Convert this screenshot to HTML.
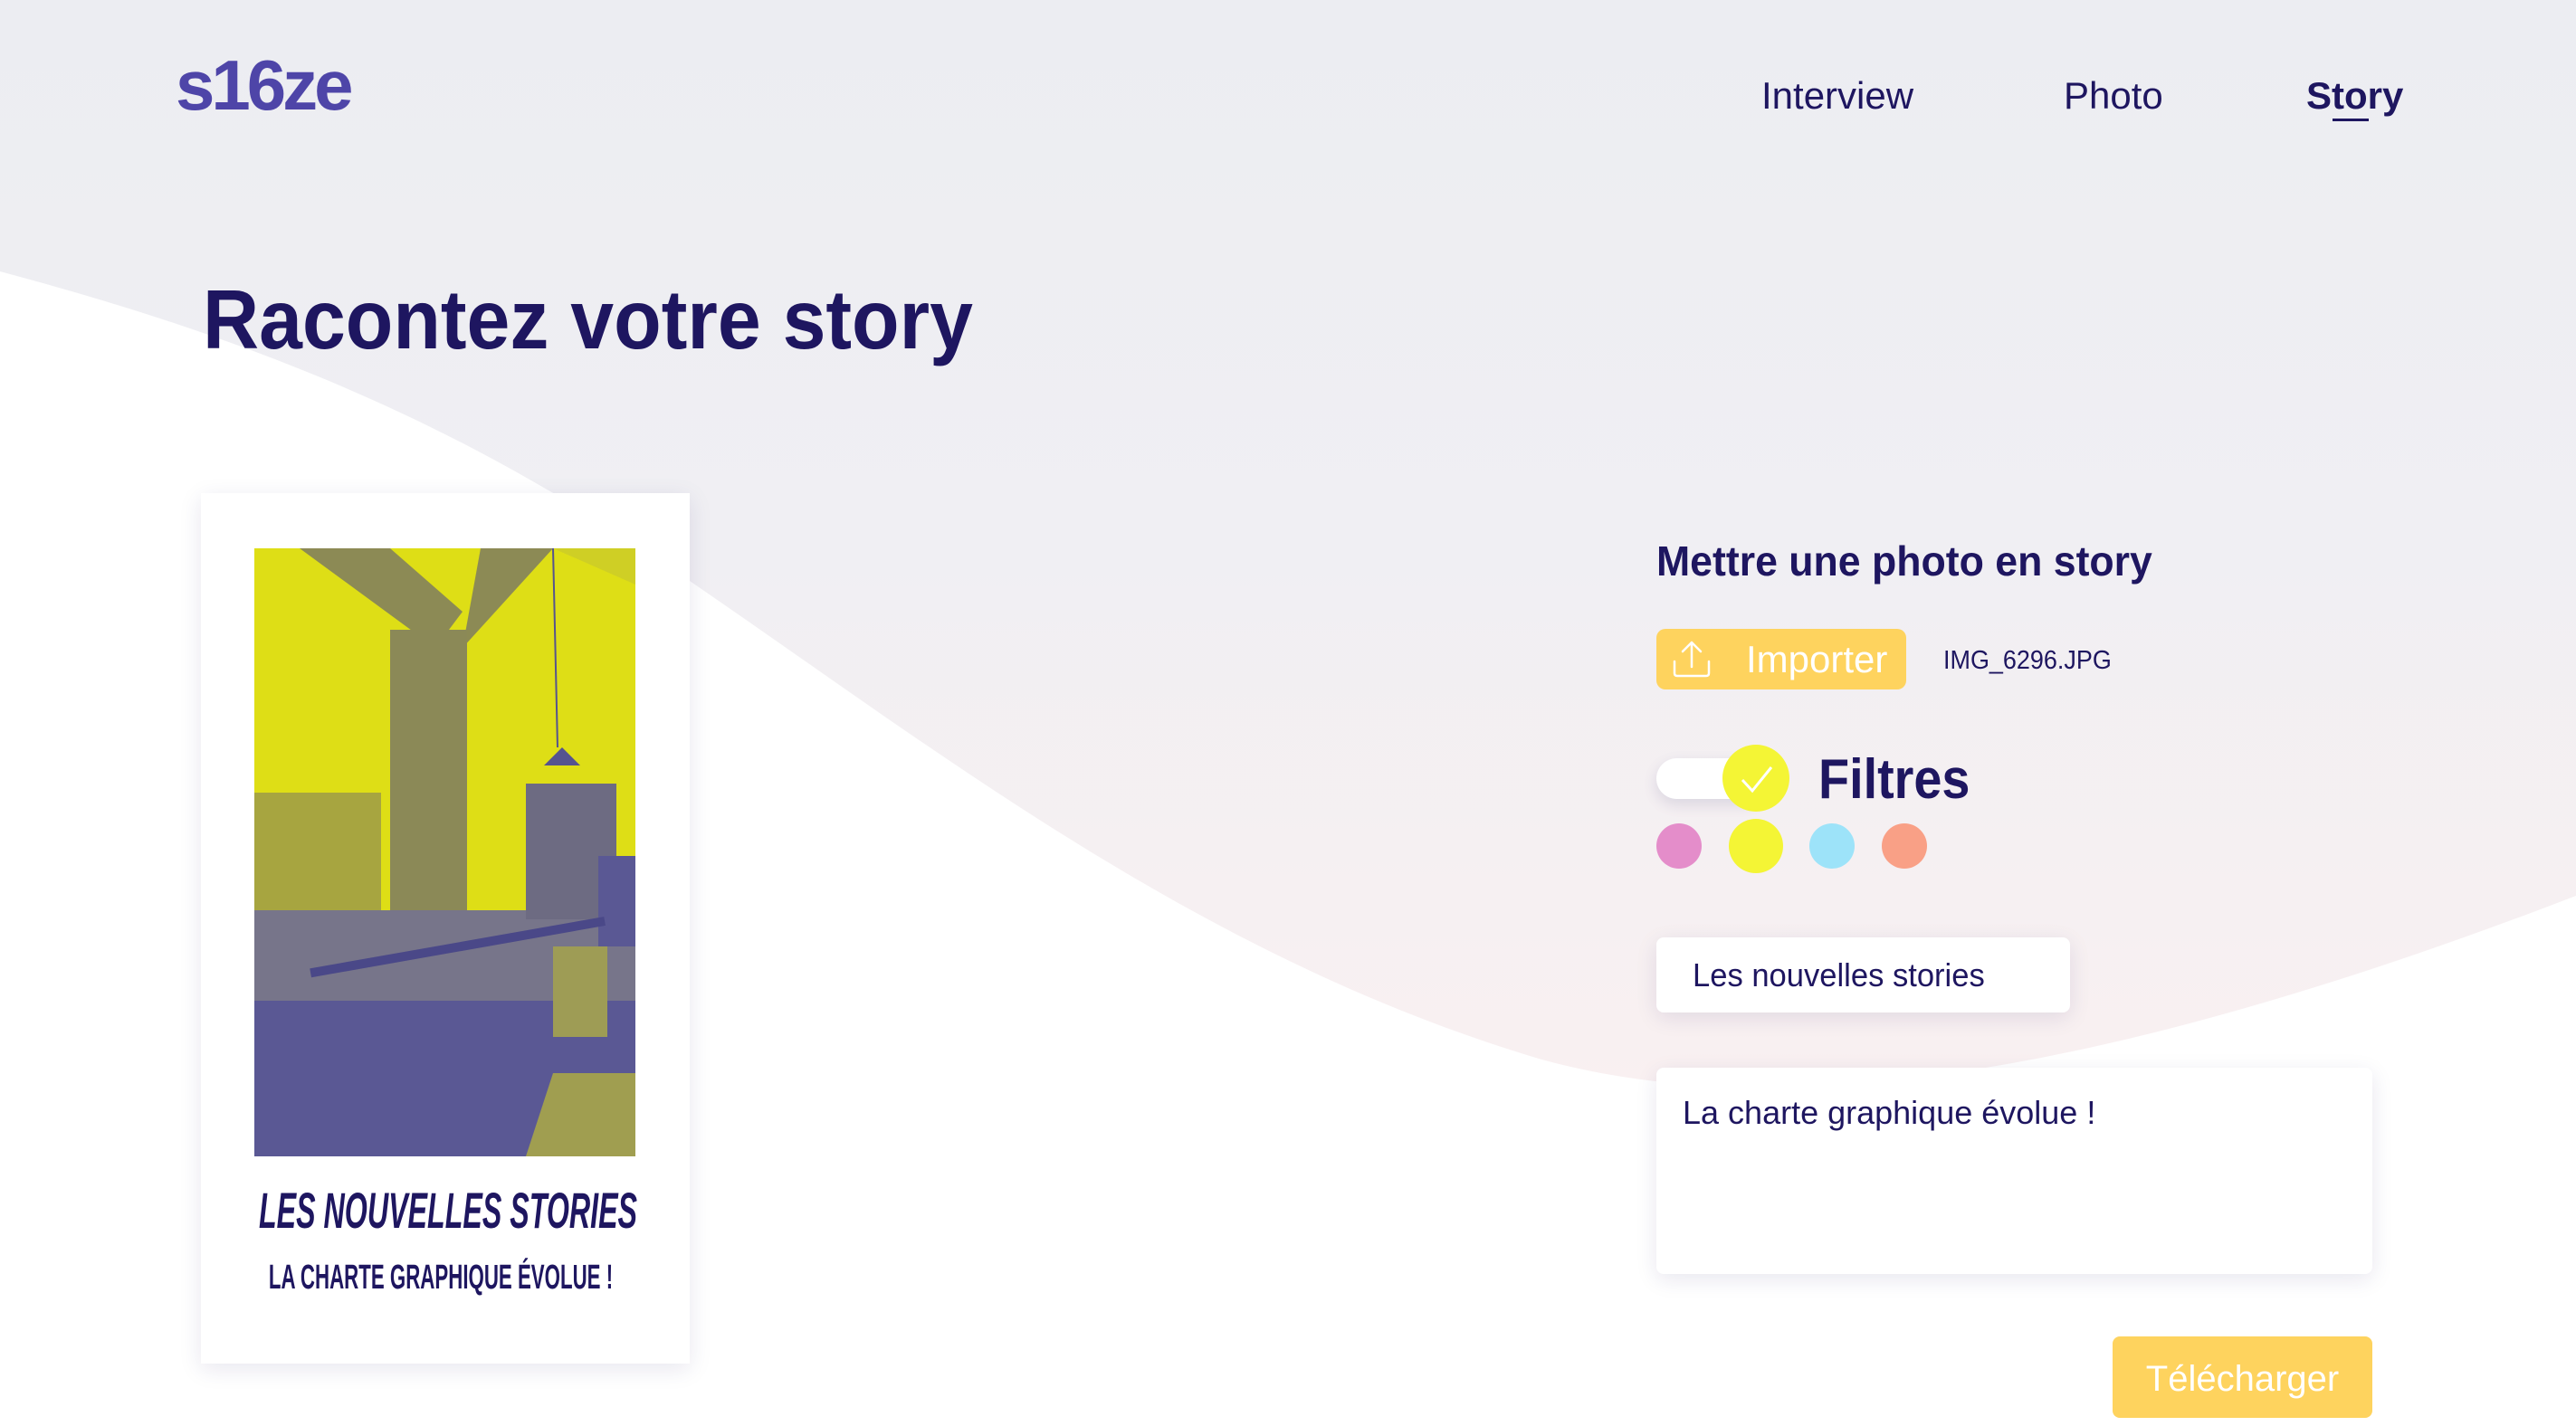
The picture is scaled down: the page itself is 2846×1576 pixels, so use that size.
<!DOCTYPE html>
<html><head><meta charset="utf-8"><style>
*{margin:0;padding:0;box-sizing:border-box}
body{width:2846px;height:1576px;position:relative;overflow:hidden;background:#fff;font-family:"Liberation Sans",sans-serif;color:#1e1660}
.abs{position:absolute;white-space:nowrap}
.nav{font-size:42px;top:76px;line-height:60px}
.sh{box-shadow:0 6px 24px rgba(30,22,96,0.10)}
</style></head><body>
<svg class="abs" style="left:0;top:0" width="2846" height="1576">
<defs><linearGradient id="g" x1="0" y1="0" x2="0" y2="1"><stop offset="0" stop-color="#ecedf2"/><stop offset="0.5" stop-color="#f0eff3"/><stop offset="1" stop-color="#f9f0f1"/></linearGradient></defs>
<path d="M0,300 C300,380 500,470 700,600 C1000,800 1300,1050 1700,1170 C1950,1240 2300,1200 2846,990 L2846,0 L0,0 Z" fill="url(#g)"/>
</svg>
<div class="abs" style="left:194px;top:54px;font-size:78px;font-weight:bold;color:#4e45a8;letter-spacing:-4px;line-height:80px">s16ze</div>
<div class="abs nav" style="left:1946px">Interview</div>
<div class="abs nav" style="left:2280px">Photo</div>
<div class="abs nav" style="left:2548px;font-weight:bold">Story</div>
<div class="abs" style="left:2577px;top:131px;width:40px;height:3px;background:#1e1660"></div>
<div class="abs" style="left:224px;top:298px;font-size:93px;font-weight:bold;line-height:110px;transform:scaleX(0.925);transform-origin:left">Racontez votre story</div>

<div class="abs sh" style="left:222px;top:545px;width:540px;height:962px;background:#fff"></div>
<svg class="abs" style="left:281px;top:606px" width="421" height="672" viewBox="0 0 421 672">
<rect width="421" height="672" fill="#dede16"/>
<polygon points="0,0 421,0 421,40 330,0 300,0" fill="#cfcf25"/>
<polygon points="50,0 150,0 230,70 200,110" fill="#8c8a55"/>
<polygon points="250,0 330,0 230,110" fill="#8c8a55"/>
<rect x="150" y="90" width="85" height="582" fill="#8b8957"/>
<rect x="0" y="270" width="140" height="160" fill="#a7a540"/>
<rect x="0" y="400" width="421" height="272" fill="#77758a"/>
<rect x="0" y="500" width="421" height="172" fill="#5a5894"/>
<rect x="300" y="260" width="100" height="150" fill="#6d6b82"/>
<rect x="380" y="340" width="41" height="100" fill="#5a5894"/>
<polygon points="330,580 421,580 421,672 300,672" fill="#a09e50"/>
<rect x="60" y="440" width="330" height="10" fill="#4a4888" transform="rotate(-10 200 445)"/>
<rect x="330" y="440" width="60" height="100" fill="#9e9c55"/>
<line x1="330" y1="0" x2="335" y2="220" stroke="#55538f" stroke-width="2"/>
<polygon points="320,240 360,240 340,220" fill="#55538f"/>
</svg>
<div class="abs" style="left:495px;top:1306px;font-size:56px;font-weight:bold;font-style:italic;line-height:64px;transform:translateX(-50%) scaleX(0.575);transform-origin:center">LES NOUVELLES STORIES</div>
<div class="abs" style="left:487px;top:1390px;font-size:38px;font-weight:bold;line-height:44px;transform:translateX(-50%) scaleX(0.586);transform-origin:center">LA CHARTE GRAPHIQUE ÉVOLUE !</div>

<div class="abs" style="left:1830px;top:592px;font-size:46px;font-weight:bold;line-height:56px;transform:scaleX(0.97);transform-origin:left">Mettre une photo en story</div>
<div class="abs" style="left:1830px;top:695px;width:276px;height:67px;background:#fed35e;border-radius:10px"></div>
<svg class="abs" style="left:1847px;top:707px" width="44" height="42" viewBox="0 0 44 42"><path d="M3,24 V37 Q3,40 6,40 H38 Q41,40 41,37 V24 M22,30 V4 M12,13 L22,3 L32,13" fill="none" stroke="#fff" stroke-width="2.5" stroke-linecap="round" stroke-linejoin="round"/></svg>
<div class="abs" style="left:1929px;top:704px;font-size:42px;color:#fff;line-height:50px">Importer</div>
<div class="abs" style="left:2147px;top:712px;font-size:29px;line-height:36px;transform:scaleX(0.93);transform-origin:left">IMG_6296.JPG</div>

<div class="abs" style="left:1830px;top:838px;width:120px;height:45px;background:#fff;border-radius:23px;box-shadow:0 6px 16px rgba(30,22,96,0.12)"></div>
<div class="abs" style="left:1903px;top:823px;width:74px;height:74px;border-radius:50%;background:#f4f535"></div>
<svg class="abs" style="left:1921px;top:844px" width="40" height="36" viewBox="0 0 40 36"><path d="M4,18 L15,30 L36,4" fill="none" stroke="#fff" stroke-width="3"/></svg>
<div class="abs" style="left:2009px;top:825px;font-size:62px;font-weight:bold;line-height:74px;transform:scaleX(0.9);transform-origin:left">Filtres</div>
<div class="abs" style="left:1830px;top:910px;width:50px;height:50px;border-radius:50%;background:#e48dca"></div>
<div class="abs" style="left:1910px;top:905px;width:60px;height:60px;border-radius:50%;background:#f4f535"></div>
<div class="abs" style="left:1999px;top:910px;width:50px;height:50px;border-radius:50%;background:#9de3f9"></div>
<div class="abs" style="left:2079px;top:910px;width:50px;height:50px;border-radius:50%;background:#f9a086"></div>

<div class="abs sh" style="left:1830px;top:1036px;width:457px;height:83px;background:#fff;border-radius:8px"></div>
<div class="abs" style="left:1870px;top:1056px;font-size:36px;line-height:44px;transform:scaleX(0.96);transform-origin:left">Les nouvelles stories</div>
<div class="abs sh" style="left:1830px;top:1180px;width:791px;height:228px;background:#fff;border-radius:8px"></div>
<div class="abs" style="left:1859px;top:1208px;font-size:36px;line-height:44px">La charte graphique évolue !</div>
<div class="abs" style="left:2334px;top:1477px;width:287px;height:90px;background:#fed35e;border-radius:8px"></div>
<div class="abs" style="left:2334px;top:1500px;width:287px;text-align:center;font-size:40px;color:#fff;line-height:48px">Télécharger</div>
</body></html>
